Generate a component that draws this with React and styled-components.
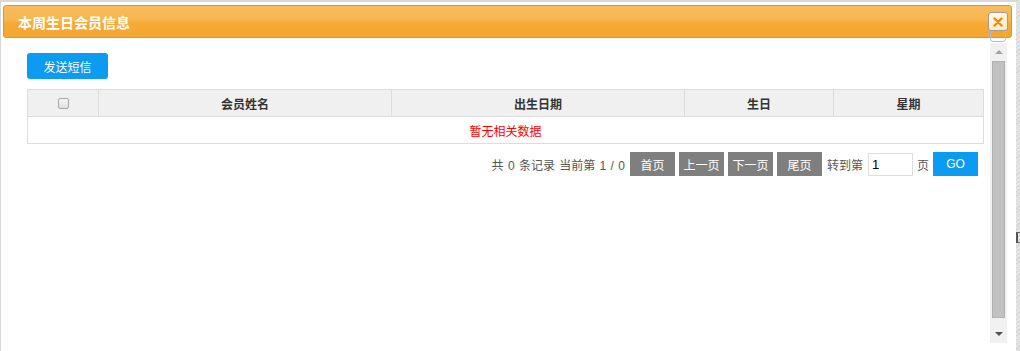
import React from "react";
import styled, { createGlobalStyle } from "styled-components";

const GlobalStyle = createGlobalStyle`
  html, body { margin: 0; padding: 0; }
  body {
    font-family: "Liberation Sans", "Noto Sans CJK SC", sans-serif;
    font-size: 12px;
    color: #333;
  }
  * { box-sizing: border-box; }
`;

const Page = styled.div`
  display: flex;
  width: 1020px;
  height: 351px;
  overflow: hidden;
  background: repeating-linear-gradient(135deg, #e4e4e4 0 2px, #d6d6d6 2px 3px);
`;

const Dialog = styled.div`
  position: relative;
  flex: none;
  width: 1016px;
  height: 351px;
  background: #fff;
  border-left: 1px solid #d6d6d6;
  border-top: 2px solid #d9d9d9;
  padding: 3px 4px 0 2px;
  display: flex;
  flex-direction: column;
`;

const TitleBar = styled.div`
  height: 33px;
  flex: none;
  display: flex;
  align-items: center;
  padding-left: 14px;
  border: 1px solid #e5951f;
  border-radius: 3px;
  background: linear-gradient(#f8bc5c 0%, #f7b650 45%, #f5aa35 55%, #f4a72f 100%);
  color: #fff;
  font-family: "Noto Sans CJK SC", sans-serif;
  font-weight: bold;
  font-size: 14px;
`;

const FocusRing = styled.div`
  position: absolute;
  top: 26px;
  left: 989px;
  width: 16px;
  height: 14px;
  border: 1px solid #9dbff0;
  border-radius: 0 0 3px 3px;
`;

const CloseButton = styled.div`
  position: absolute;
  top: 10px;
  right: 8px;
  width: 20px;
  height: 19px;
  border: 1px solid #9c9c9c;
  border-radius: 3px;
  background: linear-gradient(#fff8e4, #fbecc6);
  display: flex;
  align-items: center;
  justify-content: center;
  z-index: 2;
`;

const Body = styled.div`
  flex: 1;
  display: flex;
  margin-top: 5px;
  min-height: 0;
`;

const Content = styled.div`
  flex: 1;
  padding: 10px 6px 0 24px;
  display: flex;
  flex-direction: column;
  align-items: flex-start;
`;

const PrimaryButton = styled.button`
  height: ${(p) => p.$h || 26}px;
  width: ${(p) => p.$w || 81}px;
  margin-left: ${(p) => p.$ml || 0}px;
  border: none;
  border-radius: ${(p) => (p.$square ? 0 : 3)}px;
  background: #0b9bf0;
  color: #fff;
  font-family: ${(p) => (p.$latin ? '"Liberation Sans", sans-serif' : '"Noto Sans CJK SC", sans-serif')};
  font-size: 12px;
  padding: 0;
  cursor: pointer;
`;

const Table = styled.div`
  margin-top: 10px;
  width: 957px;
  border: 1px solid #dddddd;
`;

const HeaderRow = styled.div`
  display: grid;
  grid-template-columns: 70px 293px 293px 149px 1fr;
  background: #f0f0f0;
  border-bottom: 1px solid #dddddd;
`;

const HeadCell = styled.div`
  height: 26px;
  display: flex;
  align-items: center;
  justify-content: center;
  border-left: ${(p) => (p.$first ? "none" : "1px solid #dddddd")};
  font-family: "Noto Sans CJK SC", sans-serif;
  font-weight: bold;
  font-size: 12px;
  color: #333;
`;

const Check = styled.input`
  appearance: none;
  margin: 0;
  width: 11px;
  height: 11px;
  border: 1px solid #a6a6a6;
  border-radius: 2px;
  background: linear-gradient(#f7f7f7, #dedede);
`;

const EmptyRow = styled.div`
  height: 26px;
  display: flex;
  align-items: center;
  justify-content: center;
  color: #ff0000;
  font-family: "Noto Sans CJK SC", sans-serif;
  font-size: 12px;
`;

const Pager = styled.div`
  margin-top: 8px;
  align-self: stretch;
  display: flex;
  justify-content: flex-end;
  align-items: center;
  padding-right: 6px;
  height: 24px;
  color: #555;
  font-size: 12px;
`;

const PagerText = styled.span`
  margin-left: ${(p) => p.$ml || 0}px;
  white-space: nowrap;
  word-spacing: 1px;
`;

const PageButton = styled.span`
  width: 45px;
  height: 24px;
  margin-left: ${(p) => p.$ml || 4}px;
  background: #7f7f7f;
  color: #fff;
  display: flex;
  align-items: center;
  justify-content: center;
  font-family: "Noto Sans CJK SC", sans-serif;
  font-size: 12px;
`;

const PageInput = styled.input`
  width: 45px;
  height: 23px;
  margin-left: 5px;
  border: 1px solid #dddddd;
  padding: 0 3px;
  font-family: "Liberation Sans", sans-serif;
  font-size: 13px;
  color: #000;
  outline: none;
`;

const Scrollbar = styled.div`
  flex: none;
  width: 17px;
  height: 300px;
  margin-right: 5px;
  background: #f1f1f1;
  display: flex;
  flex-direction: column;
`;

const ScrollArrow = styled.div`
  height: 17px;
  flex: none;
  display: flex;
  align-items: center;
  justify-content: center;
`;

const Thumb = styled.div`
  height: 257px;
  margin: 1px 2px 0;
  background: #c1c1c1;
  border: 1px solid #b0b0b0;
`;

const TrackRest = styled.div`
  flex: 1;
`;

const SideStrip = styled.div`
  flex: 1;
  position: relative;
  overflow: hidden;
`;

const SideMark = styled.div`
  position: absolute;
  top: 232px;
  left: 0;
  width: 4px;
  height: 11px;
  border-left: 2px solid #555;
  border-top: 1px solid #666;
  border-bottom: 1px solid #666;
`;

export default function App() {
  return (
    <>
      <GlobalStyle />
      <Page>
        <Dialog>
          <TitleBar>本周生日会员信息</TitleBar>
          <FocusRing />
          <CloseButton>
            <svg width="10" height="10" viewBox="0 0 10 10">
              <path d="M1.5 1.5 L8.5 8.5 M8.5 1.5 L1.5 8.5" stroke="#f0890a" strokeWidth="2.4" strokeLinecap="round" />
            </svg>
          </CloseButton>
          <Body>
            <Content>
              <PrimaryButton>发送短信</PrimaryButton>
              <Table>
                <HeaderRow>
                  <HeadCell $first>
                    <Check type="checkbox" />
                  </HeadCell>
                  <HeadCell>会员姓名</HeadCell>
                  <HeadCell>出生日期</HeadCell>
                  <HeadCell>生日</HeadCell>
                  <HeadCell>星期</HeadCell>
                </HeaderRow>
                <EmptyRow>暂无相关数据</EmptyRow>
              </Table>
              <Pager>
                <PagerText>共 0 条记录 当前第 1 / 0</PagerText>
                <PageButton $ml={5}>首页</PageButton>
                <PageButton>上一页</PageButton>
                <PageButton>下一页</PageButton>
                <PageButton>尾页</PageButton>
                <PagerText $ml={5}>转到第</PagerText>
                <PageInput defaultValue="1" />
                <PagerText $ml={4}>页</PagerText>
                <PrimaryButton $w={45} $h={24} $square $latin $ml={4}>GO</PrimaryButton>
              </Pager>
            </Content>
            <Scrollbar>
              <ScrollArrow>
                <svg width="8" height="5" viewBox="0 0 8 5">
                  <path d="M0 5 L4 1 L8 5 Z" fill="#a3a3a3" />
                </svg>
              </ScrollArrow>
              <Thumb />
              <TrackRest />
              <ScrollArrow>
                <svg width="8" height="5" viewBox="0 0 8 5">
                  <path d="M0 0 L8 0 L4 4 Z" fill="#505050" />
                </svg>
              </ScrollArrow>
            </Scrollbar>
          </Body>
        </Dialog>
        <SideStrip>
          <SideMark />
        </SideStrip>
      </Page>
    </>
  );
}
